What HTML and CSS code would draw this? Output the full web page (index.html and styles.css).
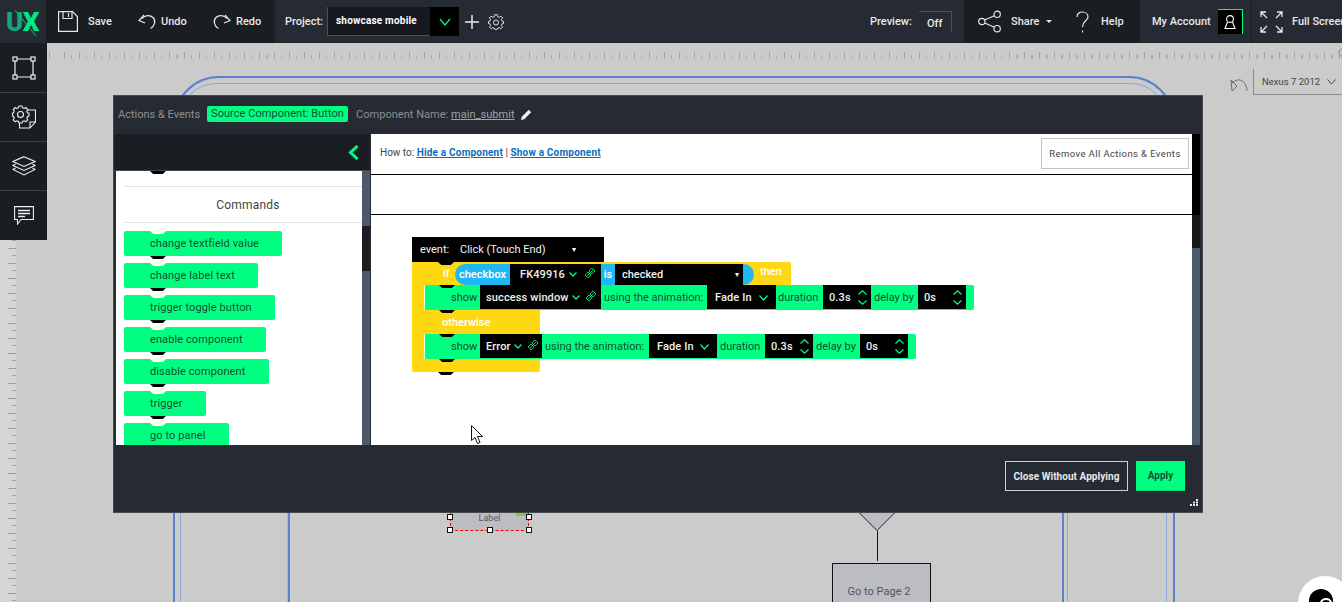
FILE: index.html
```html
<!DOCTYPE html>
<html lang="en">
<head>
<meta charset="utf-8">
<title>UX Builder</title>
<link rel="stylesheet" href="styles.css">
</head>
<body>
<div class="app">
  <header class="topbar">
    <div class="logo"><span class="logo-u">U</span><span class="logo-x">X</span><svg class="logo-slash" viewBox="0 0 46 43"><path d="M15 10 L36 36" stroke="#00c878" stroke-width="1" fill="none"/></svg></div>
    <div class="sec sec-file">
      <a class="tool t-save"><svg width="20" height="21" viewBox="0 0 20 21" fill="none" stroke="#e8e8e8" stroke-width="1.2"><path d="M.6.6H14.5L19.4 5.5V20.4H.6Z"/><path d="M5 .6V7.5H14V.6"/><path d="M10.5 2V6"/></svg><span>Save</span></a>
      <a class="tool t-undo"><svg width="18" height="16" viewBox="0 0 18 16" fill="none" stroke="#e8e8e8" stroke-width="1.2"><path d="M4 4.5C7 1 12 .5 15 3.5C18 6.5 17 12 12.5 14.5"/><path d="M6 1 1 6.5 7 9"/></svg><span>Undo</span></a>
      <a class="tool t-redo"><svg width="18" height="16" viewBox="0 0 18 16" fill="none" stroke="#e8e8e8" stroke-width="1.2"><path d="M14 4.5C11 1 6 .5 3 3.5C0 6.5 1 12 5.500 14.500"/><path d="M12 1 17 6.500 11 9"/></svg><span>Redo</span></a>
    </div>
    <div class="sec sec-project">
      <span class="proj-label">Project:</span>
      <div class="proj-input">showcase mobile</div>
      <div class="proj-arrow"><svg width="12" height="8" viewBox="0 0 12 8" fill="none" stroke="#00ff80" stroke-width="1.2"><path d="M1 1 6 7 11 1"/></svg></div>
      <svg class="proj-plus" width="14" height="14" viewBox="0 0 14 14" stroke="#e8e8e8" stroke-width="1.5"><path d="M7 0V14M0 7H14"/></svg>
      <svg class="proj-gear" width="16" height="16" viewBox="0 0 16 16" fill="none" stroke="#e0e0e0" stroke-width="1"><path d="M6.800.7H9.200L9.600 2.600 11.200 3.300 12.900 2.200 14.600 3.900 13.400 5.500 14.100 7.100 15.500 7.500V9.500L14.100 9.900 13.400 11.500 14.500 13.100 12.800 14.800 11.200 13.700 9.600 14.400 9.200 15.400H6.800L6.400 14.400 4.800 13.700 3.200 14.800 1.500 13.100 2.600 11.500 1.900 9.900.5 9.500V7.500L1.900 7.100 2.600 5.500 1.400 3.900 3.100 2.200 4.800 3.300 6.400 2.600Z"/><circle cx="8" cy="8.500" r="2.500"/></svg>
      <span class="prev-label">Preview:</span>
      <div class="prev-box">Off</div>
    </div>
    <div class="sec sec-share">
      <a class="tool t-share"><svg width="23" height="23" viewBox="0 0 24 23" fill="none" stroke="#e8e8e8" stroke-width="1.200"><circle cx="4" cy="11.500" r="3.300"/><circle cx="20" cy="4" r="3.300"/><circle cx="20" cy="19" r="3.300"/><path d="M7 10 17 5.500M7 13 17 17.500"/></svg><span>Share</span><i class="caret"></i></a>
      <a class="tool t-help"><svg width="13" height="22" viewBox="0 0 13 22" fill="none" stroke="#e8e8e8" stroke-width="1.200"><path d="M1 6C1 2.500 3.500 1 6.500 1S12 3 12 6C12 9.500 6.500 10 6.500 16"/><path d="M6.500 19.500V21.500"/></svg><span>Help</span></a>
    </div>
    <div class="sec sec-account">
      <span>My Account</span>
      <div class="avatar"><svg width="12" height="16" viewBox="0 0 12 16" fill="none" stroke="#fff" stroke-width="1.100"><circle cx="6" cy="5" r="3.400"/><path d="M3.500 8 1 14.500H11L8.500 8"/></svg></div>
    </div>
    <div class="sec sec-full">
      <svg width="23" height="22" viewBox="0 0 23 22" fill="none" stroke="#e8e8e8" stroke-width="1.300"><path d="M1 6V1H6M1 1 7 7M22 6V1H17M22 1 16 7M1 16V21H6M1 21 7 15M22 16V21H17M22 21 16 15"/></svg>
      <span>Full Screen</span>
    </div>
  </header>

  <div class="main">
    <nav class="sidetools">
      <div class="st"><svg width="24" height="24" viewBox="0 0 24 24" fill="none" stroke="#efefef" stroke-width="1.200"><path d="M5 3H19M5 21H19M3 5V19M21 5V19"/><rect x="1" y="1" width="4" height="4"/><rect x="19" y="1" width="4" height="4"/><rect x="1" y="19" width="4" height="4"/><rect x="19" y="19" width="4" height="4"/></svg></div>
      <div class="st"><svg width="24" height="24" viewBox="0 0 24 24" fill="none" stroke="#efefef" stroke-width="1.100"><path d="M7 1H10L10.500 2.800 12.300 3.500 13.800 2.500 15.800 4.500 14.800 6 15.500 7.800 17 8.200V11L15.500 11.500 14.800 13.200 15.800 14.800 13.800 16.800 12.300 15.800 10.500 16.500 10 18H7L6.500 16.500 4.800 15.800 3.200 16.800 1.200 14.800 2.200 13.200 1.500 11.500.5 11V8.200L1.500 7.800 2.200 6 1.200 4.500 3.200 2.500 4.800 3.500 6.500 2.800Z"/><circle cx="8.500" cy="9.500" r="3"/><path d="M16 5H23.500V17L18 23H7.500V18M23.500 17H18V23"/></svg></div>
      <div class="st"><svg width="24" height="20" viewBox="0 0 24 20" fill="none" stroke="#efefef" stroke-width="1.100"><path d="M12 .7 23 5.500 12 10.500 1 5.500Z"/><path d="M3.500 8 1 9.500 12 14.500 23 9.500 20.500 8"/><path d="M3.500 12 1 13.500 12 19 23 13.500 20.500 12"/></svg></div>
      <div class="st"><svg width="20" height="19" viewBox="0 0 20 19" fill="none" stroke="#efefef" stroke-width="1.100"><path d="M.6.6H19.400V13.500H7L3.500 18V13.500H.6Z"/><path d="M4 4.500H16M4 7.500H16M4 10.500H11" stroke-width="1.300"/></svg></div>
    </nav>

    <div class="canvas">
      <div class="ruler-top"></div>
      <div class="frame-outer"></div>
      <div class="frame-inner"></div>
      <div class="vline vl-a"></div>
      <div class="vline vl-b"></div>

      <svg class="ruler-gear" width="11" height="11" viewBox="0 0 11 11" fill="none" stroke="#a8a8a8" stroke-width="2"><circle cx="5.500" cy="5.500" r="3.500"/></svg>
      <svg class="rotate" width="18" height="16" viewBox="0 0 18 16" fill="none" stroke="#6c6c6c" stroke-width="1"><path d="M17 15C17 7 11 2 6 4.500 4.500 5.200 3 6 2 7"/><path d="M1 4 2 15 7 10Z"/></svg>
      <div class="device">Nexus 7 2012<svg width="9" height="6" viewBox="0 0 9 6" fill="none" stroke="#444" stroke-width="1"><path d="M.5.500 4.500 5 8.500.5"/></svg></div>

      <div class="label-node">Label
        <i class="grip"></i>
        <i class="h h-tl"></i><i class="h h-tr"></i><i class="h h-bl"></i><i class="h h-bm"></i><i class="h h-br"></i>
      </div>
      <svg class="tri" width="36" height="20" viewBox="0 0 36 20"><path d="M.5 0 18 17.500 35.500 0" fill="#bcbdc2" stroke="#222" stroke-width="1"/></svg>
      <div class="connector"></div>
      <div class="page-node">Go to Page 2</div>

      <div class="chat-bubble"><div class="chat-dot"></div><div class="chat-cut"></div></div>
    </div>
  </div>

  <div class="ruler-left"></div>

  <section class="modal">
    <div class="m-head">
      <span class="m-title">Actions &amp; Events</span>
      <span class="m-badge">Source Component: Button</span>
      <span class="m-name">Component Name: <u>main_submit</u></span>
      <svg width="11" height="11" viewBox="0 0 11 11"><path d="M0 11 .8 7.800 7.800.8 10.200 3.200 3.200 10.200Z" fill="#f0f0f0"/></svg>
    </div>
    <div class="m-body">
      <aside class="palette">
        <div class="pal-band"><svg width="11" height="15" viewBox="0 0 11 15" fill="none" stroke="#00ff80" stroke-width="3"><path d="M9.500 1 2.500 7.500 9.500 14"/></svg></div>
        <div class="pal-wrap">
          <div class="pal-list">
            <i class="pal-notch"></i>
            <h3 class="pal-title">Commands</h3>
            <div class="cmd c1">change textfield value</div>
            <div class="cmd c2">change label text</div>
            <div class="cmd c3">trigger toggle button</div>
            <div class="cmd c4">enable component</div>
            <div class="cmd c5">disable component</div>
            <div class="cmd c6">trigger</div>
            <div class="cmd c7">go to panel</div>
          </div>
          <div class="sb sb-left"><div class="sb-thumb"></div></div>
        </div>
      </aside>
      <div class="editor">
        <div class="howto">
          <p>How to: <a>Hide a Component</a> | <a>Show a Component</a></p>
          <button class="remove">Remove All Actions &amp; Events</button>
        </div>
        <div class="strip"></div>
        <div class="workspace">
          <div class="event notch">
            <span class="ev-a">event:</span><span class="ev-b">Click (Touch End)</span><span class="ev-c">▾</span>
          </div>
          <div class="ifblock notch">
            <div class="if-top">
              <span class="kw kw-if">if</span>
              <div class="pill">
                <span class="pill-txt pt1">checkbox</span>
                <span class="pf pf1">FK49916<svg class="chev" width="8" height="5" viewBox="0 0 8 5" fill="none" stroke="#00ff80" stroke-width="1.300"><path d="M.5.500 4 4 7.500.5"/></svg><svg class="lnk" width="12" height="12" viewBox="0 0 12 12" fill="none" stroke="#00ff80" stroke-width=".8"><path d="M1 8 4 5 7 8 4 11ZM5 4 8 1 11 4 8 7Z"/><path d="M3 9 9 3"/></svg></span>
                <span class="pill-txt pt2">is</span>
                <span class="pf pf2">checked<span class="pf-arrow">▾</span></span>
                <span class="pill-end"></span>
              </div>
              <span class="kw kw-then">then</span>
            </div>
            <div class="grow notch-s notch-t">
              <span class="t t-show">show</span>
              <span class="f f-success">success window<svg class="chev" width="8" height="5" viewBox="0 0 8 5" fill="none" stroke="#00ff80" stroke-width="1.300"><path d="M.5.500 4 4 7.500.5"/></svg><svg class="lnk" width="12" height="12" viewBox="0 0 12 12" fill="none" stroke="#00ff80" stroke-width=".8"><path d="M1 8 4 5 7 8 4 11ZM5 4 8 1 11 4 8 7Z"/><path d="M3 9 9 3"/></svg></span>
              <span class="t t-using">using the animation:</span>
              <span class="f f-fade">Fade In<svg class="chev ch-fade" width="9" height="6" viewBox="0 0 9 6" fill="none" stroke="#00ff80" stroke-width="1.300"><path d="M.5.500 4.500 5 8.500.5"/></svg></span>
              <span class="t t-dur">duration</span>
              <span class="f f-num">0.3s<svg class="spin" width="9" height="15" viewBox="0 0 9 15" fill="none" stroke="#00ff80" stroke-width="1.200"><path d="M.5 4.500 4.500.8 8.500 4.500M.5 10.500 4.500 14.200 8.500 10.500"/></svg></span>
              <span class="t t-del">delay by</span>
              <span class="f f-num">0s<svg class="spin" width="9" height="15" viewBox="0 0 9 15" fill="none" stroke="#00ff80" stroke-width="1.200"><path d="M.5 4.500 4.500.8 8.500 4.500M.5 10.500 4.500 14.200 8.500 10.500"/></svg></span>
            </div>
            <div class="otherwise">otherwise</div>
            <div class="grow notch-s notch-t">
              <span class="t t-show">show</span>
              <span class="f f-error">Error<svg class="chev" width="8" height="5" viewBox="0 0 8 5" fill="none" stroke="#00ff80" stroke-width="1.300"><path d="M.5.500 4 4 7.500.5"/></svg><svg class="lnk" width="12" height="12" viewBox="0 0 12 12" fill="none" stroke="#00ff80" stroke-width=".8"><path d="M1 8 4 5 7 8 4 11ZM5 4 8 1 11 4 8 7Z"/><path d="M3 9 9 3"/></svg></span>
              <span class="t t-using2">using the animation:</span>
              <span class="f f-fade2">Fade In<svg class="chev ch-fade" width="9" height="6" viewBox="0 0 9 6" fill="none" stroke="#00ff80" stroke-width="1.300"><path d="M.5.500 4.500 5 8.500.5"/></svg></span>
              <span class="t t-dur2">duration</span>
              <span class="f f-num">0.3s<svg class="spin" width="9" height="15" viewBox="0 0 9 15" fill="none" stroke="#00ff80" stroke-width="1.200"><path d="M.5 4.500 4.500.8 8.500 4.500M.5 10.500 4.500 14.200 8.500 10.500"/></svg></span>
              <span class="t t-del">delay by</span>
              <span class="f f-num">0s<svg class="spin" width="9" height="15" viewBox="0 0 9 15" fill="none" stroke="#00ff80" stroke-width="1.200"><path d="M.5 4.500 4.500.8 8.500 4.500M.5 10.500 4.500 14.200 8.500 10.500"/></svg></span>
            </div>
            <div class="if-bottom"></div>
          </div>
          <svg class="cursor" width="13" height="19" viewBox="0 0 13 19"><path d="M.5.500V15.500L4 12.500 6.500 18.500 9 17.500 6.500 11.500H11.500Z" fill="#fff" stroke="#111" stroke-width="1"/></svg>
        </div>
      </div>
      <div class="sb sb-right"><div class="sb-cap"></div><div class="sb-thumb2"></div></div>
    </div>
    <div class="m-foot">
      <button class="btn-close">Close Without Applying</button>
      <button class="btn-apply">Apply</button>
      <svg class="resize" width="8" height="7" viewBox="0 0 8 7" fill="#e8e8e8"><path d="M6 0H8V2H6ZM3 2.500H5V4.500H3ZM6 2.500H8V4.500H6ZM0 5H2V7H0ZM3 5H5V7H3ZM6 5H8V7H6Z"/></svg>
    </div>
  </section>
</div>
</body>
</html>
```
FILE: styles.css
```css
* { box-sizing: border-box; }
html, body { margin: 0; padding: 0; height: 100%; overflow: hidden; }
body { font-family: Roboto, "Liberation Sans", sans-serif; font-size: 11px; background: #cbcbcb; }
.app { position: relative; width: 1342px; height: 602px; overflow: hidden; display: flex; flex-direction: column; }

/* top bar */
.topbar { display: flex; height: 43px; flex: none; background: #262a33; color: #e8e8e8; font-weight: 500; font-size: 11px; }
.logo { position: relative; width: 46px; display: flex; align-items: center; justify-content: center; font-weight: 900; font-size: 26px; letter-spacing: -.5px; padding-right: 1px; }
.logo-u { color: #0fa878; }
.logo-x { color: #00e884; }
.logo-slash { position: absolute; left: 0; top: 0; width: 46px; height: 43px; }
.sec { display: flex; align-items: center; height: 43px; flex: none; }
.tool { display: flex; align-items: center; }
.sec-file { width: 229px; background: #1a1d22; padding-left: 12px; }
.t-save { gap: 10px; width: 80px; }
.t-undo { gap: 5px; width: 75px; }
.t-redo { gap: 5px; }
.sec-project { width: 689px; padding-left: 10px; }
.proj-label { width: 42px; }
.proj-input { width: 103px; height: 29px; background: #15181c; border-left: 1px solid #4a4e55; border-bottom: 1px solid #4a4e55; color: #fff; font-weight: 700; font-size: 10px; line-height: 28px; padding-left: 8px; letter-spacing: .2px; }
.proj-arrow { width: 29px; height: 29px; background: #000; display: flex; align-items: center; justify-content: center; }
.proj-plus { margin-left: 6px; }
.proj-gear { margin-left: 9px; }
.prev-label { margin-left: 366px; width: 49px; }
.prev-box { width: 33px; height: 21px; border-top: 1px solid #4a4e55; border-right: 1px solid #4a4e55; padding: 5px 0 0 8px; }
.sec-share { width: 176px; background: #1a1d22; padding-left: 14px; }
.t-share { width: 97px; gap: 10px; }
.caret { width: 0; height: 0; border: 3px solid transparent; border-top-color: #e8e8e8; border-bottom: 0; margin-left: -3px; }
.t-help { gap: 12px; margin-left: 1px; }
.sec-account { width: 111px; padding-left: 12px; }
.avatar { width: 25px; height: 25px; margin-left: 7px; background: #000; border-top: 1px solid #00ff80; border-right: 1px solid #00ff80; display: flex; align-items: center; justify-content: center; }
.sec-full { flex: 1; min-width: 0; padding-left: 8px; gap: 9px; white-space: nowrap; border-left: 1px solid #1a1d22; overflow: hidden; }
.sec-full svg { flex: none; }
.sec-full span { flex: none; }

/* side toolbar and canvas */
.main { display: flex; flex: 1; min-height: 0; }
.sidetools { width: 47px; flex: none; align-self: flex-start; background: #1a1d22; }
.st { height: 49px; display: flex; align-items: center; justify-content: center; border-top: 1px solid #3b3e44; }
.st:first-child { border-top: 0; }
.st:last-child { height: 50px; }
.canvas { position: relative; flex: 1; overflow: hidden; }
.ruler-top { position: absolute; left: 0; top: 9px; right: 0; height: 7px; background:
  repeating-linear-gradient(90deg, #a6a6a6 0 1px, transparent 1px 15px) 2px 0 / 100% 7px no-repeat,
  repeating-linear-gradient(90deg, #b0b0b0 0 1px, transparent 1px 7.5px) 2px 3px / 100% 4px no-repeat; }
.ruler-left { position: absolute; left: 0; top: 240px; width: 16px; bottom: 0; background:
  repeating-linear-gradient(180deg, #a0a0a0 0 1px, transparent 1px 15px) 8px 8px / 8px 100% no-repeat,
  repeating-linear-gradient(180deg, #a0a0a0 0 1px, transparent 1px 15px) 12px 0 / 4px 100% no-repeat,
  #d6d6d6; }
.ruler-gear { position: absolute; left: 1290px; top: 4px; }
.frame-outer { position: absolute; left: 126px; top: 33px; width: 1002px; height: 700px; border: 2px solid #5c80d0; border-radius: 46px; }
.frame-inner { position: absolute; left: 133px; top: 40px; width: 987px; height: 700px; border: 1px solid #8ea6d8; border-radius: 36px; }
.vline { position: absolute; top: 470px; bottom: 0; }
.vl-a { left: 240px; width: 3px; border-right: 2px solid #5c80d0; background: #b4b5bb; }
.vl-b { left: 1015px; width: 6px; border-left: 2px solid #5c80d0; border-right: 1px solid #8ea6d8; }
.rotate { position: absolute; left: 1183px; top: 33px; }
.device { position: absolute; left: 1206px; top: 26px; width: 120px; height: 26px; border-left: 1px solid #8c8c8c; border-bottom: 1px solid #8c8c8c; color: #444; font-size: 9.500px; padding: 6px 0 0 8px; display: flex; align-items: flex-start; gap: 7px; line-height: 13px; }
.device svg { margin-top: 4px; }
.label-node { position: absolute; left: 403px; top: 470px; width: 79px; height: 18px; background: #bcbdc2; color: #555; font-size: 9px; text-align: center; line-height: 10px; border-bottom: 1px dashed #f00; border-left: 1px dashed #f00; border-right: 1px dashed #f00; }
.grip { position: absolute; right: 0; top: 0; width: 12px; height: 3px; background: #8bc34a; }
.h { position: absolute; width: 6px; height: 6px; background: #fff; border: 1px solid #111; }
.h-tl { left: -4px; top: 1px; }
.h-tr { right: -4px; top: 1px; }
.h-bl { left: -4px; bottom: -3px; }
.h-bm { left: 36px; bottom: -3px; }
.h-br { right: -4px; bottom: -3px; }
.tri { position: absolute; left: 812px; top: 470px; }
.connector { position: absolute; left: 830px; top: 488px; width: 1px; height: 30px; background: #111; }
.page-node { position: absolute; left: 785px; top: 520px; width: 99px; height: 60px; background: #bcbdc2; border: 1px solid #111; color: #555; text-align: center; padding: 21px 5px 0 0; line-height: 13px; }
.chat-bubble { position: absolute; left: 1251px; top: 533px; width: 54px; height: 54px; background: #fff; border-radius: 50%; }
.chat-dot { position: absolute; left: 11px; top: 13px; width: 24px; height: 24px; background: #000; border-radius: 50%; }
.chat-cut { position: absolute; left: 22px; top: 22px; width: 12px; height: 10px; border: 2px solid #fff; border-radius: 50%; }

/* modal */
.modal { position: absolute; left: 113px; top: 95px; width: 1090px; height: 418px; background: #262a33; border: 1px solid #45484d; display: flex; flex-direction: column; }
.m-head { height: 38px; flex: none; display: flex; align-items: center; padding: 0 0 2px 4px; color: #8c8f95; font-size: 11px; }
.m-title { width: 89px; }
.m-badge { width: 141px; height: 16px; background: #00ff80; color: #174a37; border-radius: 2px; line-height: 16px; text-align: center; letter-spacing: .05px; }
.m-name { margin-left: 8px; width: 165px; letter-spacing: .03px; }
.m-name u { color: #a0a3a8; }
.m-body { flex: 1; min-height: 0; display: flex; }
.palette { width: 257px; flex: none; display: flex; flex-direction: column; border-right: 1px solid #262a33; }
.pal-band { height: 36px; flex: none; background: #1a1d22; display: flex; align-items: center; justify-content: flex-end; padding-right: 11px; }
.pal-wrap { flex: 1; min-height: 0; display: flex; padding-left: 2px; border-top: 1px solid #45484d; }
.pal-list { position: relative; width: 246px; background: #fff; padding-left: 8px; overflow: hidden; }
.pal-notch { position: absolute; left: 34px; top: 0; width: 16px; height: 3px; background: #000; clip-path: polygon(0 0, 100% 0, 80% 100%, 20% 100%); }
.pal-title { margin: 15px 0 8px; height: 37px; border-top: 1px solid #e2e2e2; border-bottom: 1px solid #e2e2e2; font-weight: 400; font-size: 12px; line-height: 36px; text-align: center; color: #444; padding-left: 10px; letter-spacing: .2px; }
.cmd { position: relative; height: 25px; margin-bottom: 7px; background: #00ff80; color: #174a37; border-radius: 2px; padding-left: 26px; line-height: 25px; font-size: 11px; letter-spacing: .1px; }
.cmd::before { content: ""; position: absolute; left: 26px; top: 0; width: 16px; height: 3px; background: #fff; clip-path: polygon(0 0, 100% 0, 80% 100%, 20% 100%); }
.cmd::after { content: ""; position: absolute; left: 26px; bottom: -3px; width: 16px; height: 3px; background: #000; clip-path: polygon(0 0, 100% 0, 80% 100%, 20% 100%); }
.c1 { width: 158px; }
.c2 { width: 134px; }
.c3 { width: 151px; }
.c4 { width: 142px; }
.c5 { width: 145px; }
.c6 { width: 82px; }
.c7 { width: 105px; }
.sb { width: 8px; flex: none; background: #4a5a68; }
.sb-thumb { margin-top: 55px; height: 45px; background: #1a1d22; }
.editor { width: 821px; flex: none; background: #fff; display: flex; flex-direction: column; }
.sb-cap { height: 81px; background: #000; }
.sb-thumb2 { height: 33px; background: #15191c; }
.howto { height: 41px; flex: none; display: flex; justify-content: space-between; padding: 4px 3px 0 9px; border-bottom: 1px solid #000; }
.howto p { margin: 0; padding-top: 9px; font-size: 10px; line-height: 12px; color: #444; }
.howto a { color: #0a6ebd; font-weight: 700; text-decoration: underline; letter-spacing: .2px; }
.remove { width: 148px; height: 31px; background: #fff; border: 1px solid #c4c4c4; color: #444; font-family: Roboto, sans-serif; font-size: 9.500px; letter-spacing: .4px; padding: 0; }
.strip { height: 40px; flex: none; border-bottom: 1px solid #000; }
.workspace { position: relative; flex: 1; min-height: 0; padding: 22px 0 0 41px; overflow: hidden; }

/* blocks */
.notch { position: relative; }
.notch::after, .notch-s::after, .notch-t::before { content: ""; position: absolute; width: 16px; height: 3px; background: #000; clip-path: polygon(0 0, 100% 0, 80% 100%, 20% 100%); }
.notch::after { left: 26px; bottom: -3px; }
.notch-s::after { left: 14px; bottom: -3px; }
.notch-t::before { left: 14px; top: 0; }
.event { width: 192px; height: 25px; background: #000; color: #f0f0f0; display: flex; align-items: center; padding-left: 8px; z-index: 2; }
.ev-a { width: 40px; }
.ev-b { width: 112px; }
.ev-c { font-size: 8px; color: #fff; }
.ifblock { width: 128px; height: 110px; background: #ffd814; border-radius: 0 0 2px 2px; }
.if-top { width: 379px; height: 23px; background: #ffd814; border-radius: 0 2px 0 0; display: flex; align-items: center; position: relative; }
.kw { color: #fff; font-weight: 500; }
.kw-if { width: 43px; padding-left: 31px; }
.kw-then { margin: -4px 0 0 6px; }
.pill { width: 299px; height: 21px; background: #1fb8f5; border-radius: 11px; display: flex; overflow: hidden; margin-top: 2px; color: #fff; }
.pill-txt { font-weight: 500; line-height: 22px; }
.pt1 { width: 55px; padding-left: 4px; }
.pt2 { width: 14px; text-align: center; }
.pf { background: #000; height: 21px; line-height: 22px; position: relative; color: #f0f0f0; font-weight: 500; }
.pf1 { width: 91px; padding-left: 10px; letter-spacing: .1px; }
.pf2 { width: 128px; padding-left: 7px; }
.pf-arrow { position: absolute; right: 4px; top: 0; font-size: 8px; }
.chev { margin-left: 3px; vertical-align: 1px; }
.lnk { margin-left: 5px; vertical-align: -1px; }
.pf1 .chev { margin-left: 4px; }
.pf1 .lnk { margin-left: 7px; }
.ch-fade { position: absolute; right: 8px; top: 10px; margin: 0; }
.spin { position: absolute; right: 4px; top: 5px; }
.grow { position: relative; display: flex; width: max-content; height: 25px; margin-left: 12px; padding-right: 8px; background: #00ff80; border-radius: 0 2px 2px 0; border-left: 1px solid #e8ffe0; color: #174a37; font-size: 11px; }
.t { line-height: 25px; white-space: nowrap; }
.t-show { width: 29px; margin-left: 26px; }
.t-using { width: 106px; padding-left: 3px; }
.t-using2 { width: 107px; padding-left: 3px; }
.t-dur { width: 47px; padding-left: 2px; }
.t-dur2 { width: 48px; padding-left: 3px; }
.t-del { width: 47px; padding-left: 3px; }
.f { position: relative; height: 24px; background: #000; color: #f0f0f0; font-weight: 500; line-height: 25px; white-space: nowrap; padding-left: 6px; letter-spacing: .12px; }
.f-success { width: 121px; }
.f-error { width: 62px; }
.f-fade { width: 69px; padding-left: 8px; }
.f-fade2 { width: 68px; padding-left: 8px; }
.f-num { width: 48px; }
.otherwise { height: 24px; padding-left: 30px; line-height: 25px; color: #fff; font-weight: 500; }
.if-bottom { height: 13px; }
.cursor { position: absolute; left: 100px; top: 210px; }

/* footer */
.m-foot { position: relative; height: 67px; flex: none; display: flex; justify-content: flex-end; align-items: flex-start; gap: 8px; padding: 16px 17px 0 0; }
.btn-close { width: 123px; height: 30px; background: transparent; border: 1px solid #d0d0d0; color: #e8e8e8; font-family: Roboto, sans-serif; font-size: 10px; font-weight: 700; padding: 0; letter-spacing: .05px; }
.btn-apply { width: 49px; height: 30px; background: #00ff80; border: 0; border-bottom: 1px solid #00d86c; color: #174a37; font-family: Roboto, sans-serif; font-size: 10px; font-weight: 700; padding: 0; }
.resize { position: absolute; right: 4px; bottom: 6px; }
```
